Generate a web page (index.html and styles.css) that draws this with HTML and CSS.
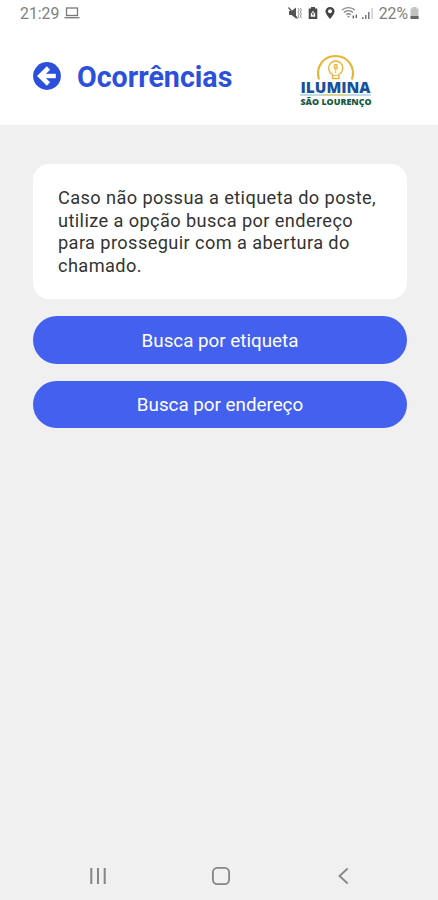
FILE: index.html
```html
<!DOCTYPE html>
<html lang="pt-BR">
<head>
    <meta charset="UTF-8">
    <meta name="viewport" content="width=device-width, initial-scale=1.0">
    <title>Ocorrências</title>
    <link rel="stylesheet" href="styles.css">
</head>
<body>

    <header>
        <div class="status-bar">
            <div class="status-left">
                <span class="time">21:29</span>
                <svg class="laptop" width="16" height="12" viewBox="0 0 16 12" fill="none" stroke="#777" stroke-width="1.3">
                    <rect x="2.5" y="1" width="11" height="7.5"/>
                    <path d="M0.5 10.7h15"/>
                </svg>
            </div>
            <div class="status-right">
                <!-- muted / vibrate -->
                <svg width="14" height="14" viewBox="0 0 14 14">
                    <path d="M1 5h2.5L8 1.5v11L3.5 9H1z" fill="#555"/>
                    <path d="M0.5 1.5l9 11" stroke="#555" stroke-width="1.2"/>
                    <path d="M10 2l1.2 2L10 6l1.2 2L10 10l1.2 2M12.4 2l1 2-1 2 1 2-1 2 1 2" fill="none" stroke="#888" stroke-width="0.9"/>
                </svg>
                <!-- battery saver -->
                <svg class="saver" width="10" height="14" viewBox="0 0 10 14">
                    <path d="M3 1h4v1.5h2.3v10.5H0.7V2.5H3z" fill="#4a4a4a"/>
                    <path d="M2.8 7.8L5 4.8l2.2 3v3H2.8z" fill="#fff"/>
                    <path d="M5 6.5v2.8" stroke="#4a4a4a" stroke-width="1.3"/>
                </svg>
                <!-- location -->
                <svg class="pin" width="10" height="14" viewBox="0 0 10 14">
                    <path d="M5 1C2.5 1 0.5 2.8 0.5 5.3 0.5 8.2 5 13 5 13s4.5-4.8 4.5-7.7C9.5 2.8 7.5 1 5 1z" fill="#444"/>
                    <circle cx="5" cy="5.2" r="2" fill="#fff"/>
                </svg>
                <!-- wifi -->
                <svg class="wifi" width="18" height="14" viewBox="0 0 18 14" fill="none" stroke="#888" stroke-width="1.4">
                    <path d="M1 4C4.5 0.8 10.5 0.8 14 4M3 6.5c2.6-2.3 6.4-2.3 9 0M5.2 8.8c1.3-1.2 3.3-1.2 4.6 0"/>
                    <path d="M6 10l1.5 1.8L9 10z" fill="#888" stroke="none"/>
                    <path d="M12.3 9.5v3M15.3 8.5v3.5" stroke="#666"/>
                </svg>
                <svg class="signal" width="13" height="14" viewBox="0 0 13 14">
                    <path d="M1 11h1.5v2H1zM4 9h1.5v4H4zM7 6h1.5v7H7z" fill="#777"/>
                    <path d="M10.5 2h1.3v11h-1.3z" fill="#c8c8c8"/>
                </svg>
                <span class="percent">22%</span>
                <svg class="battery" width="9" height="14" viewBox="0 0 9 14">
                    <path d="M2.5 1h4v1.5h2v10.5h-8V2.5h2z" fill="#c2c2c2"/>
                    <path d="M0.5 10h8v3h-8z" fill="#666"/>
                </svg>
            </div>
        </div>

        <div class="title-bar">
            <a class="back" href="#" aria-label="Voltar">
                <svg width="28" height="28" viewBox="0 0 28 28">
                    <circle cx="14" cy="14" r="13.9" fill="#2c50dc"/>
                    <path d="M15.5 6L7.3 14l8.2 8" fill="none" stroke="#fff" stroke-width="4.6"/>
                    <path d="M8.5 14h14.3" stroke="#fff" stroke-width="4.4"/>
                </svg>
            </a>
            <h1>Ocorrências</h1>
            <svg class="logo" width="76" height="56" viewBox="0 0 76 56">
                <path d="M21 27.5c-4-13 5-23.5 16.500-23.500S58 14.500 54 27.500" fill="none" stroke="#e9b432" stroke-width="2.2"/>
                <path d="M34.500 26.500v-4c-2.200-1.300-3.800-3.600-3.800-6.500a7 7 0 0 1 14 0c0 2.900-1.600 5.200-3.800 6.500v4z" fill="#fffdf2" stroke="#e4b545" stroke-width="1.4"/>
                <path d="M36.200 12.500h3v4.500h-3zM37.700 17v4M35 23.500h5.500" fill="#efcf6c" stroke="#e9bd4c" stroke-width="1"/>
                <text class="logo-name" x="2.5" y="41" textLength="70" lengthAdjust="spacingAndGlyphs">ILUMINA</text>
                <path d="M2 43h71" stroke="#a9cfdf" stroke-width="1.5"/>
                <path d="M25 43h25" stroke="#e7d37a" stroke-width="1.5"/>
                <text class="logo-city" x="2.5" y="53.3" textLength="71" lengthAdjust="spacingAndGlyphs">SÃO LOURENÇO</text>
            </svg>
        </div>
    </header>

    <main>
        <p class="card">Caso não possua a etiqueta do poste, utilize a opção busca por endereço para prosseguir com a abertura do chamado.</p>
        <button class="btn">Busca por etiqueta</button>
        <button class="btn">Busca por endereço</button>
    </main>

    <nav class="nav-bar">
        <svg width="18" height="18" viewBox="0 0 18 18" stroke="#858585" stroke-width="2">
            <path d="M2.3 1v16M9 1v16M15.7 1v16"/>
        </svg>
        <svg width="20" height="20" viewBox="0 0 20 20" fill="none" stroke="#858585" stroke-width="1.8">
            <rect x="1.9" y="1.9" width="16.2" height="16.2" rx="4.5"/>
        </svg>
        <svg width="18" height="18" viewBox="0 0 18 18" fill="none" stroke="#858585" stroke-width="1.8">
            <path d="M12.7 1.5L4.5 9l8.2 7.5"/>
        </svg>
    </nav>

</body>
</html>
```
FILE: styles.css
```css
* {
    box-sizing: border-box;
}

body {
    font-family: Roboto, "Liberation Sans", sans-serif;
    margin: 0;
    min-height: 100vh;
    display: flex;
    flex-direction: column;
    background-color: #f0f0f0;
}

svg {
    display: block;
    flex-shrink: 0;
    overflow: visible;
}

header {
    height: 125px;
    background-color: #fff;
}

.status-bar {
    display: flex;
    justify-content: space-between;
    height: 26px;
    padding: 0 19px 0 20px;
    color: #808080;
    font-size: 15.8px;
}

.status-left, .status-right {
    display: flex;
    align-items: center;
}

.laptop {
    margin-left: 5px;
}

.saver {
    margin-left: 6px;
}

.pin {
    margin-left: 7px;
}

.wifi {
    margin-left: 6px;
}

.signal {
    margin-left: 2px;
}

.percent {
    margin-left: 5px;
    margin-right: 2px;
}

.title-bar {
    display: flex;
    align-items: center;
    height: 98px;
    padding: 0 64px 0 33px;
}

.back {
    margin-top: 1px;
}

h1 {
    margin: 4px 0 0 16px;
    font-size: 28.6px;
    font-weight: 700;
    color: #2c50dc;
}

.logo {
    margin-left: auto;
    margin-top: 9px;
}

.logo-name {
    font-family: "Open Sans", sans-serif;
    font-size: 15.5px;
    font-weight: 800;
    fill: #17519c;
}

.logo-city {
    font-family: "Open Sans", sans-serif;
    font-size: 8px;
    font-weight: 800;
    fill: #17593f;
}

main {
    flex: 1;
    display: flex;
    flex-direction: column;
    gap: 17px;
    padding: 39px 31px 0 33px;
}

.card {
    margin: 0;
    height: 135px;
    padding: 23px 25px;
    border-radius: 16px;
    background-color: #fff;
    color: #333;
    font-size: 18.2px;
    line-height: 22.5px;
    letter-spacing: 0.4px;
}

.btn {
    height: 47.5px;
    padding: 2px 0 0;
    border: none;
    border-radius: 24px;
    background-color: #4361ee;
    color: #fff;
    font-family: inherit;
    font-size: 18.8px;
    cursor: pointer;
}

.nav-bar {
    display: flex;
    justify-content: space-between;
    align-items: center;
    height: 48px;
    padding: 0 85px 0 89px;
}
```
